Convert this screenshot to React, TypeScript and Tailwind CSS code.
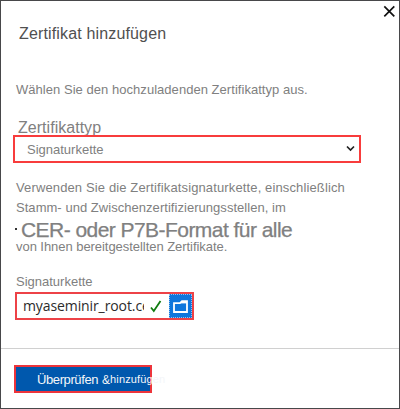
import React from "react";

const body = "block whitespace-nowrap leading-5 text-[#808080]";

export default function App() {
  return (
    <main className="flex h-[409px] w-[400px] flex-col overflow-hidden border border-[#48484a] bg-white font-['Liberation_Sans',Arial,sans-serif]">
      <header className="flex h-[79px] items-start justify-between">
        <h1 className="mt-[23px] ml-[18px] whitespace-nowrap text-[16px] leading-5 tracking-[0.15px] text-[#505050]">
          Zertifikat hinzufügen
        </h1>
        <button aria-label="Schließen" className="mt-[4px] mr-[3px]">
          <svg width="13" height="13" viewBox="0 0 13 13" fill="none" stroke="#111" strokeWidth="1.7">
            <path d="M1.3 1.3 11.3 11.3M11.3 1.3 1.3 11.3" />
          </svg>
        </button>
      </header>
      <section className="flex h-[268px] flex-col items-start">
        <p className={`${body} ml-[15px] text-[13px] tracking-[0.04px]`}>Wählen Sie den hochzuladenden Zertifikattyp aus.</p>
        <label className="mt-[18px] ml-[17px] block h-[17px] whitespace-nowrap text-[16px] leading-5 tracking-[0.03px] text-[#808080]">
          Zertifikattyp
        </label>
        <div className="ml-[12px] flex h-[28px] w-[348px] items-center justify-between border-2 border-[#f83c3c] pr-[4px] pl-[12px]">
          <span className={`${body} mt-[2px] text-[13px]`}>Signaturkette</span>
          <svg width="9" height="7" viewBox="0 0 9 7" className="mb-[2px]" fill="none" stroke="#222" strokeWidth="1.7">
            <path d="M1 1.5 4.5 5 8 1.5" />
          </svg>
        </div>
        <p className={`${body} mt-[15px] ml-[15px] text-[13px] tracking-[0.13px]`}>Verwenden Sie die Zertifikatsignaturkette, einschließlich</p>
        <p className={`${body} ml-[15px] text-[13px] tracking-[0.04px]`}>Stamm- und Zwischenzertifizierungsstellen, im</p>
        <p className="ml-[14px] flex h-[19px] items-center whitespace-nowrap text-[21px] leading-[19px] tracking-[-0.55px] text-[#808080] [-webkit-text-stroke:0.25px_#808080]">
          <span className="mt-[2px] mr-[4px] size-[2px] bg-[#333]" />
          <span className="mt-[3px]">CER- oder P7B-Format für alle</span>
        </p>
        <p className={`${body} ml-[15px] text-[13px] tracking-[-0.05px]`}>von Ihnen bereitgestellten Zertifikate.</p>
        <label className={`${body} mt-[15px] ml-[15px] text-[13px]`}>Signaturkette</label>
        <div className="ml-[14px] flex h-[28px] w-[179px] items-center border-2 border-[#ed4247]">
          <span className="ml-[6px] w-[121px] overflow-hidden whitespace-nowrap font-['Open_Sans','Noto_Sans',sans-serif] text-[14px] leading-6 tracking-[-0.1px] text-[#2b2b2b]">
            myaseminir_root.ce
          </span>
          <svg width="12" height="13" viewBox="0 0 12 13" className="ml-[6px]" fill="none" stroke="#107c10" strokeWidth="1.8">
            <path d="M1 7.5 3.8 11 10.5 1" />
          </svg>
          <span className="ml-auto flex h-[24px] w-[23px] items-center justify-center border border-dotted border-[#8fc3f3] bg-[#0f76dc]">
            <svg width="15" height="13" viewBox="0 0 15 13" fill="none" stroke="white" strokeWidth="1.8">
              <path d="M1 12V3.2H7L9 1.2H14V12Z" />
              <path d="M8 2.5H14" />
            </svg>
          </span>
        </div>
      </section>
      <footer className="flex flex-1 items-start border-t border-[#d0d0d0]">
        <button className="mt-[16px] ml-[13px] flex h-[28px] w-[138px] items-center border-2 border-[#ed343b] bg-[#0058ad] pl-[21px] whitespace-nowrap text-[#f4f6f9]">
          <span className="mt-[2px] text-[13px] tracking-[-0.4px]">Überprüfen</span>
          <span className="mt-[2px] ml-[4px] text-[12px] tracking-[-1px]">&amp;</span>
          <span className="mt-px ml-px text-[11px] tracking-[0.15px]">hinzufügen</span>
        </button>
      </footer>
    </main>
  );
}
